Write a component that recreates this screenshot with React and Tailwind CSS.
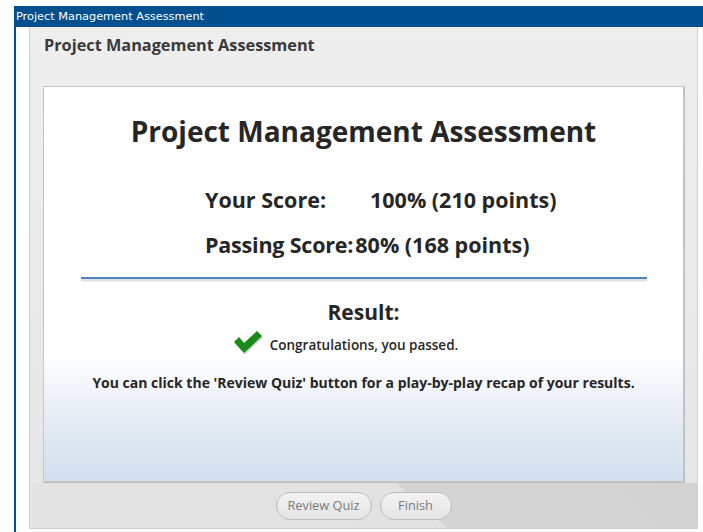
export default function App() {
  const font = { fontFamily: '"Open Sans", "Noto Sans", sans-serif' }
  return (
    <div className="w-[703px] h-[532px] bg-white overflow-hidden pt-[6px]">
      <div className="h-[21px] ml-[14px] bg-[#00508f] text-white text-[11.3px] leading-[21px] pl-[2px] font-['DejaVu_Sans',sans-serif]">
        Project Management Assessment
      </div>
      <div className="h-[505px] ml-[14px] border-l-2 border-[#00508f] pl-[13px] pr-[5px] flex items-start">
        <div
          className="flex-1 h-[502px] border-x border-b border-[#cfcfcf] bg-[linear-gradient(180deg,#eeeeee_0%,#e6e6e6_100%)] flex flex-col"
          style={font}
        >
          <div className="h-[36px] pl-[14px] pt-[7px] text-[16.3px] font-bold text-[#3a3a3a] leading-[22px]">
            Project Management Assessment
          </div>
          <div className="mx-[13px] mt-[23px] h-[396px] border border-[#c6c6c6] shadow-[1px_1px_0_#bdbdbd] bg-[linear-gradient(180deg,#ffffff_0%,#ffffff_68%,#e9eef5_82%,#d2e0ee_100%)] flex flex-col items-center">
            <div className="mt-[26px] text-[28px] font-bold text-[#262626] leading-[36px]">
              Project Management Assessment
            </div>
            <div className="w-full pl-[161px] mt-[37px] text-[21.5px] font-bold text-[#262626] leading-[28px]">
              <div className="flex">
                <span className="w-[165px] shrink-0">Your Score:</span>
                <span>100% (210 points)</span>
              </div>
              <div className="flex mt-[17px]">
                <span className="shrink-0 tracking-[-0.2px]">Passing Score:</span>
                <span className="ml-[2px]">80% (168 points)</span>
              </div>
            </div>
            <div className="mt-[18px] w-[566px] h-[2px] bg-[#4d84c6] shadow-[0_2px_2px_rgba(0,0,0,0.18)]" />
            <div className="mt-[19px] text-[21px] font-bold text-[#262626] leading-[28px]">Result:</div>
            <div className="flex items-center mt-[9px] ml-[-37px]">
              <svg width="32" height="26" viewBox="0 0 32 26" className="mr-[6px] mt-[-6px]">
                <path d="M2 13 L7 8 L12 14 L25 2 L30 7 L12 24 Z" fill="#9a9a9a" opacity="0.45" transform="translate(1,1.5)" />
                <path d="M2 13 L7 8 L12 14 L25 2 L30 7 L12 24 Z" fill="#178a17" />
              </svg>
              <span className="text-[13.5px] font-semibold text-[#262626]">Congratulations, you passed.</span>
            </div>
            <div className="mt-[17px] text-[14px] font-bold text-[#262626]">
              You can click the 'Review Quiz' button for a play-by-play recap of your results.
            </div>
          </div>
          <div className="flex-1 mt-[1px] bg-[linear-gradient(41deg,#e4e4e4_0%,#e2e2e2_58%,#d5d5d5_58.2%,#d3d3d3_100%)] flex justify-center items-start gap-[8px] pt-[9px]">
            <button className="w-[96px] h-[28px] rounded-full border border-[#bdbdbd] bg-[linear-gradient(180deg,#f3f3f3,#e4e4e4)] text-[12.8px] text-[#7a7a7a]">
              Review Quiz
            </button>
            <button className="w-[72px] h-[28px] rounded-full border border-[#bdbdbd] bg-[linear-gradient(180deg,#f3f3f3,#e4e4e4)] text-[12.8px] text-[#7a7a7a]">
              Finish
            </button>
          </div>
        </div>
      </div>
    </div>
  )
}
